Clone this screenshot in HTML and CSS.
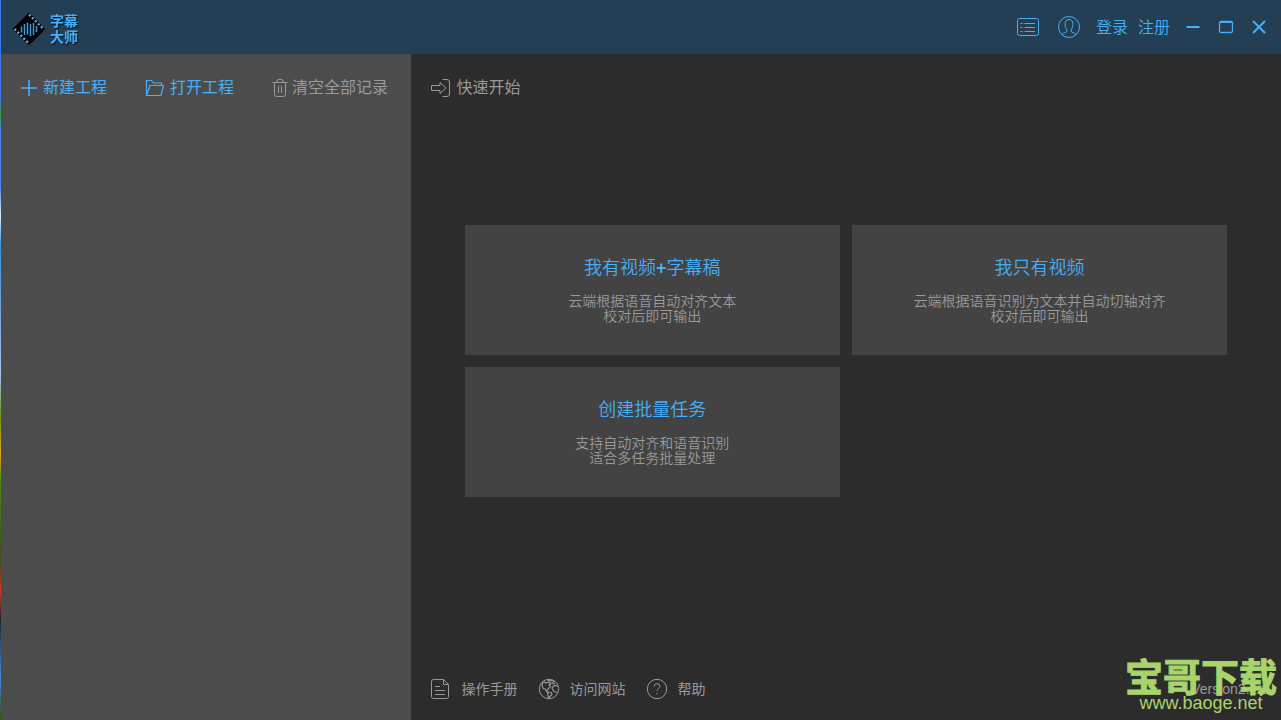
FILE: index.html
```html
<!DOCTYPE html>
<html lang="zh-CN">
<head>
<meta charset="utf-8">
<meta name="viewport" content="width=device-width, initial-scale=1">
<title>字幕大师</title>
<link rel="stylesheet" href="styles.css">
</head>
<body>
<div class="desktop-edge"></div>
<div class="app">
  <header class="titlebar">
    <div class="brand">
      <svg class="brand-mark" width="36" height="36" viewBox="0 0 36 36" aria-hidden="true">
        <path d="M18 .8 35.200 18 18 35.200.8 18Z" fill="#020406" stroke="#39424c" stroke-width="1"/>
        <path d="M18 3.500 33 18.500M3.500 18 18.500 33" fill="none" stroke="#5aaef2" stroke-width="2.200" stroke-dasharray="2.200 2"/>
        <path d="M10.500 15.500v6M13.500 13v11M16.500 11.500v12M19.500 13v12M22.500 12v12M25.500 15v6" fill="none" stroke="#3f97d8" stroke-width="1.500"/>
      </svg>
      <span class="brand-name">字幕<br>大师</span>
    </div>
    <nav class="title-actions">
      <button class="icon-btn list-btn" aria-label="任务列表">
        <svg width="24" height="20" viewBox="0 0 24 20"><rect x="1.500" y="1.500" width="21" height="17" rx="2"/><path d="M8.500 6.500H19M8.500 10.500H19M8.500 14.500H19M4.500 6.500h2M4.500 10.500h2M4.500 14.500h2"/></svg>
      </button>
      <button class="icon-btn user-btn" aria-label="用户">
        <svg width="24" height="24" viewBox="0 0 24 24"><circle cx="12" cy="12" r="10.500"/><path d="M5 19.500c1-2 4.500-1.500 5-3.500.3-1.500-1.500-2.500-1.800-5C7.800 7 9 4.500 12 4.500S16.200 7 15.800 11c-.3 2.500-2.100 3.500-1.800 5 .5 2 4 1.500 5 3.500"/></svg>
      </button>
      <a class="account-link" href="#login">登录</a>
      <a class="account-link" href="#register">注册</a>
      <button class="icon-btn window-btn" aria-label="最小化"><svg width="16" height="16" viewBox="0 0 16 16"><path d="M1.500 8h13"/></svg></button>
      <button class="icon-btn window-btn" aria-label="最大化"><svg width="16" height="16" viewBox="0 0 16 16"><rect x="1.500" y="2.500" width="13" height="11" rx="1.500" stroke-width="1.300"/><path d="M2 3h12"/></svg></button>
      <button class="icon-btn window-btn" aria-label="关闭"><svg width="16" height="16" viewBox="0 0 16 16"><path d="m2 2 12 12m0-12L2 14"/></svg></button>
    </nav>
  </header>
  <div class="workspace">
    <aside class="sidebar">
      <button class="tool new-tool">
        <svg width="18" height="18" viewBox="0 0 18 18"><path d="M1 9h16M9 1v16" stroke-width="1.600"/></svg>
        <span>新建工程</span>
      </button>
      <button class="tool open-tool">
        <svg width="20" height="18" viewBox="0 0 20 18"><path d="M1.500 16V1.500h5l2 2.500h8v2.500M1.500 16.500 5 6.500h13.500L16 16.500Z" stroke-width="1.200"/></svg>
        <span>打开工程</span>
      </button>
      <button class="tool clear-tool">
        <svg width="16" height="20" viewBox="0 0 16 20"><path d="M.5 4.500h15M5 4V3q0-1.500 1.500-1.500h3Q11 1.500 11 3v1M2.500 4.500v12q0 2 2 2h7q2 0 2-2v-12M6.500 8v7M9.500 8v7"/></svg>
        <span>清空全部记录</span>
      </button>
    </aside>
    <main class="main">
      <h1 class="start">
        <svg width="21" height="20" viewBox="0 0 21 20"><path d="M1.500 7.500h8.500v-3l6 5.500-6 5.500v-3H1.500ZM12.500 1.500H17q2.500 0 2.500 2.500v12q0 2.500-2.500 2.500h-4.500"/></svg>
        <span>快速开始</span>
      </h1>
      <div class="cards">
        <button class="card"><span class="card-title">我有视频<b>+</b>字幕稿</span><span class="card-text">云端根据语音自动对齐文本<br>校对后即可输出</span></button>
        <button class="card"><span class="card-title">我只有视频</span><span class="card-text">云端根据语音识别为文本并自动切轴对齐<br>校对后即可输出</span></button>
        <button class="card"><span class="card-title">创建批量任务</span><span class="card-text">支持自动对齐和语音识别<br>适合多任务批量处理</span></button>
      </div>
      <footer class="footer">
        <a class="foot-link" href="#manual">
          <svg width="22" height="22" viewBox="0 0 22 22"><path d="M13.500 1.500h-10q-2 0-2 2v15q0 2 2 2h13q2 0 2-2v-12ZM13.500 1.500v5h5M5 8.500h5M5 12.500h10M5 16.500h10"/></svg>
          <span>操作手册</span>
        </a>
        <a class="foot-link" href="#site">
          <svg width="22" height="22" viewBox="0 0 22 22"><circle cx="11" cy="11" r="9.700"/><path d="M5 3.500 4 7l1 3.500 2.500.5 1 2.500L10 11l2.500-2.500L11 7l2-1.500-2.500-1.500L8 5 5.500 3.500M9 1.500l3 1.500 3-1M16 2.500 14.500 5l2.500 1M20 8l-4-.5L14 10l2 3.500 3 1M9.500 14l3.500.5 1 2-3.500 3.500Z" stroke-width="1.200"/></svg>
          <span>访问网站</span>
        </a>
        <a class="foot-link" href="#help">
          <svg width="22" height="22" viewBox="0 0 22 22"><circle cx="11" cy="11" r="9.700"/><path d="M8 8.500Q8 5.700 11 5.700t3 2.600c0 2-3 2.200-3 4.700M11 14.800v1.500"/></svg>
          <span>帮助</span>
        </a>
        <span class="version">Version2.1.3</span>
      </footer>
    </main>
  </div>
</div>
<div class="watermark"><span class="mark-name">宝哥下载</span><span class="mark-url">www.baoge.net</span></div>
</body>
</html>
```
FILE: styles.css
```css
* { box-sizing: border-box; }

body {
  margin: 0;
  min-height: 100vh;
  display: flex;
  background: #2c2c2c;
  color: #9a9a9a;
  font-family: "Liberation Sans", "Noto Sans CJK SC", sans-serif;
  font-size: 16px;
}

button {
  margin: 0;
  padding: 0;
  border: 0;
  background: none;
  color: inherit;
  font: inherit;
  cursor: pointer;
}

a { color: inherit; text-decoration: none; }

svg {
  display: block;
  flex: none;
  fill: none;
  stroke: currentColor;
  stroke-width: 1;
}

.desktop-edge {
  flex: 0 0 1px;
  background: linear-gradient(#3c78e8 0 14%, #2aa52a 16%, #4f86e8 18% 26%, #dfeef5 30%, #3399e0 34%, #7aa5dc 44%, #a9c4ee 52%, #6c9a10 58%, #e0a820 63%, #4e8a10 67%, #3b4a18 78%, #d03a20 82%, #222 86%, #3d8be8 94%, #35500f);
}

.app {
  flex: 1;
  min-width: 0;
  display: flex;
  flex-direction: column;
}

.titlebar {
  display: flex;
  justify-content: space-between;
  align-items: center;
  height: 54px;
  padding: 0 14px 0 10px;
  background: #243e53;
  color: #45b0f9;
}

.brand { display: flex; align-items: center; gap: 3px; padding-top: 3px; }

.brand-name {
  font-size: 14px;
  line-height: 16px;
  font-weight: 700;
  text-shadow: 1px 1px 1px #0a1420;
}

.title-actions { display: flex; align-items: center; }
.list-btn { margin-right: 17px; }
.user-btn { margin-right: 15px; }
.account-link { margin-right: 10px; padding-top: 1px; line-height: 24px; font-weight: 350; }
.window-btn { margin-left: 17px; }
.window-btn svg { stroke-width: 2; }
.account-link + .window-btn { margin-left: 5px; }

.workspace { flex: 1; display: flex; }

.sidebar {
  flex: 0 0 32%;
  display: flex;
  align-items: flex-start;
  padding: 22px 0 22px 19px;
  background: #4c4c4c;
}

.tool {
  display: flex;
  align-items: center;
  gap: 5px;
  line-height: 24px;
  white-space: nowrap;
}

.new-tool, .open-tool { color: #45b0f9; margin-right: 38px; }
.clear-tool { gap: 4px; }

.main {
  flex: 1;
  display: flex;
  flex-direction: column;
  padding: 22px 11px 20px 19px;
  background: #2c2c2c;
}

.start {
  display: flex;
  align-items: center;
  gap: 6px;
  margin: 0;
  font-size: 16px;
  line-height: 24px;
  font-weight: 400;
}

.cards {
  flex: 1;
  display: grid;
  grid-template-columns: 1fr 1fr;
  align-content: center;
  gap: 12px;
  padding: 0 43px 56px 35px;
}

.card {
  display: flex;
  flex-direction: column;
  align-items: center;
  gap: 14px;
  padding: 31px 16px;
  background: #434343;
  font-weight: 350;
}

.card-title { color: #45b0f9; font-size: 18px; line-height: 24px; }
.card-text { font-size: 14px; line-height: 15px; }

.footer {
  display: flex;
  align-items: center;
  gap: 20px;
  font-size: 14px;
  line-height: 22px;
}

.foot-link { display: flex; align-items: center; gap: 10px; }
.version { margin-left: auto; padding-right: 1px; }

.watermark {
  position: absolute;
  right: 4px;
  bottom: 8px;
  display: flex;
  flex-direction: column;
  align-items: center;
  color: #a9d46c;
  pointer-events: none;
}

.mark-name {
  font-size: 38px;
  line-height: 32px;
  font-weight: 700;
  -webkit-text-stroke: 1px #a9d46c;
  stroke-linejoin: round;
}

.mark-url { font-size: 18px; line-height: 18px; }
```
